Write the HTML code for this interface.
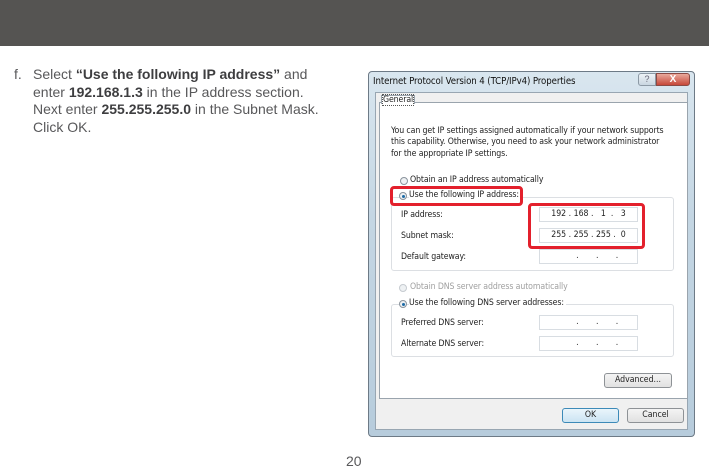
<!DOCTYPE html>
<html><head><meta charset="utf-8"><style>
*{margin:0;padding:0;box-sizing:border-box}
body{width:709px;height:467px;background:#fff;position:relative;overflow:hidden;font-family:"Liberation Sans",sans-serif}
.hdr{position:absolute;left:0;top:0;width:709px;height:46px;background:#555452}
.para{position:absolute;left:33px;top:66px;font-size:14px;line-height:17.5px;color:#58585a;white-space:nowrap}
.para b{color:#3e3e40}
.ab{position:absolute}
.dt{position:absolute;font-family:"DejaVu Sans Condensed","DejaVu Sans",sans-serif;font-size:8.7px;color:#1e1e1e;white-space:nowrap;letter-spacing:-0.1px}
.fld{position:absolute;background:#fff;border:1px solid #d8dde2;font-family:"DejaVu Sans Condensed",sans-serif;font-size:8.7px;color:#222;text-align:center;line-height:13px;white-space:pre}
.grp{position:absolute;border:1px solid #dcdfe3;border-radius:3px}
.rad{position:absolute;width:8px;height:8px;border-radius:50%;border:1px solid #8a939c;background:#eef1f3}
.rad.on::after{content:"";position:absolute;left:1.5px;top:1.5px;width:3px;height:3px;border-radius:50%;background:#1d6aa5}
.red{position:absolute;border:3px solid #e3202c;border-radius:4px}
.btn{position:absolute;border:1px solid #8e9296;border-radius:3px;background:linear-gradient(#f4f4f4,#e1e1e1);font-family:"DejaVu Sans Condensed",sans-serif;font-size:8.7px;text-align:center;line-height:13px;color:#222}
</style></head><body>
<div class="hdr"></div>
<div class="ab" style="left:14px;top:66px;font-size:14px;line-height:17.5px;color:#58585a">f.</div>
<div class="para">Select <b>“Use the following IP address”</b> and<br>enter <b>192.168.1.3</b> in the IP address section.<br>Next enter <b>255.255.255.0</b> in the Subnet Mask.<br>Click OK.</div>

<div class="ab" style="left:368px;top:71px;width:327px;height:366px;border:1px solid #6d7a86;border-radius:4px;background:linear-gradient(#d9e6ef,#c4d6e3 40%,#b7ccdc);"></div>
<div class="ab" style="left:375px;top:92px;width:313px;height:338px;background:#f0f0f0;border:1px solid #98a6b2"></div>
<div class="dt" style="left:373px;top:76px;font-size:9.6px;color:#111">Internet Protocol Version 4 (TCP/IPv4) Properties</div>
<div class="ab" style="left:638px;top:73px;width:18px;height:13px;border:1px solid #8c99a5;border-radius:3px 0 0 3px;background:linear-gradient(#eef3f7,#c9d6e1);font-size:9px;color:#667;text-align:center;line-height:11px">?</div>
<div class="ab" style="left:656px;top:73px;width:34px;height:13px;border:1px solid #8a4a45;border-radius:0 3px 3px 0;background:linear-gradient(#e9a99c,#c6483a);font-size:10px;color:#fff;font-weight:bold;text-align:center;line-height:12px">X</div>

<div class="ab" style="left:379px;top:102px;width:309px;height:297px;background:#fff;border:1px solid #9aa4ad"></div>
<div class="ab" style="left:381px;top:95px;width:34px;height:9px;background:#fff;border:1px solid #9aa4ad;border-bottom:none"></div>
<div class="dt" style="left:383px;top:95px;outline:1px dotted #555">General</div>

<div class="dt" style="left:391px;top:126px;line-height:11.3px">You can get IP settings assigned automatically if your network supports<br>this capability. Otherwise, you need to ask your network administrator<br>for the appropriate IP settings.</div>

<div class="rad" style="left:400px;top:177px"></div>
<div class="dt" style="left:410px;top:175px">Obtain an IP address automatically</div>
<div class="grp" style="left:391px;top:197px;width:283px;height:74px"></div>
<div class="rad on" style="left:399px;top:192px"></div>
<div class="dt" style="left:409px;top:190px;background:#fff;padding-right:2px">Use the following IP address:</div>
<div class="dt" style="left:401px;top:210px">IP address:</div>
<div class="dt" style="left:401px;top:231px">Subnet mask:</div>
<div class="dt" style="left:401px;top:252px">Default gateway:</div>
<div class="fld" style="left:539px;top:207px;width:99px;height:15px">192 . 168 .   1  .   3</div>
<div class="fld" style="left:539px;top:228px;width:99px;height:15px">255 . 255 . 255 .  0</div>
<div class="fld" style="left:539px;top:249px;width:99px;height:15px">       .       .       .</div>

<div class="rad" style="left:399px;top:284px;border-color:#c6cbd0"></div>
<div class="dt" style="left:410px;top:282px;color:#a0a0a0">Obtain DNS server address automatically</div>
<div class="grp" style="left:391px;top:304px;width:283px;height:53px"></div>
<div class="rad on" style="left:399px;top:300px"></div>
<div class="dt" style="left:409px;top:298px;background:#fff;padding-right:2px">Use the following DNS server addresses:</div>
<div class="dt" style="left:401px;top:318px">Preferred DNS server:</div>
<div class="dt" style="left:401px;top:339px">Alternate DNS server:</div>
<div class="fld" style="left:539px;top:315px;width:99px;height:15px">       .       .       .</div>
<div class="fld" style="left:539px;top:336px;width:99px;height:15px">       .       .       .</div>

<div class="btn" style="left:604px;top:373px;width:68px;height:15px">Advanced...</div>
<div class="btn" style="left:562px;top:408px;width:57px;height:15px;border-color:#3c8ab8;background:linear-gradient(#eaf5fb,#cbe4f3)">OK</div>
<div class="btn" style="left:627px;top:408px;width:57px;height:15px">Cancel</div>

<div class="red" style="left:390px;top:186px;width:133px;height:20px"></div>
<div class="red" style="left:528px;top:203px;width:117px;height:46px"></div>

<div class="ab" style="left:346px;top:453px;font-size:14px;color:#58585a">20</div>
</body></html>
